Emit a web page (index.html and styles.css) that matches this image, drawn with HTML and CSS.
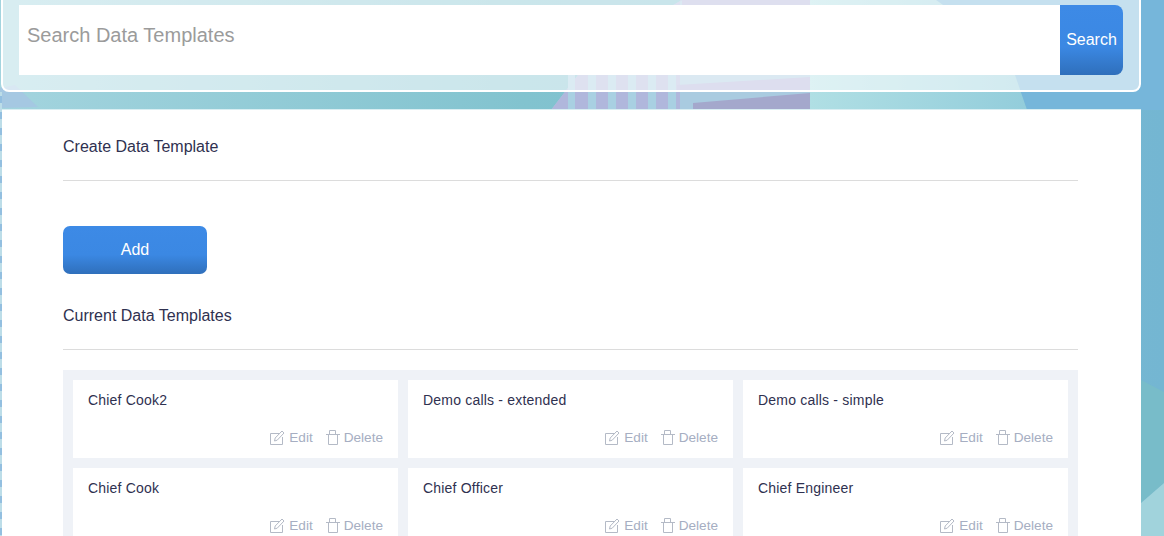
FILE: index.html
```html
<!DOCTYPE html>
<html lang="en">
<head>
<meta charset="utf-8">
<title>Data Templates</title>
<link rel="stylesheet" href="styles.css">
</head>
<body>
<svg class="backdrop" viewBox="0 0 1164 536" width="1164" height="536" aria-hidden="true">
  <defs>
    <linearGradient id="bg" x1="0" y1="0" x2="1" y2="0">
      <stop offset="0" stop-color="#a3d4de"/>
      <stop offset="0.45" stop-color="#82c3cf"/>
      <stop offset="1" stop-color="#74b6d2"/>
    </linearGradient>
    <linearGradient id="lite" x1="0" y1="0" x2="1" y2="0">
      <stop offset="0" stop-color="#b0dfe4"/>
      <stop offset="1" stop-color="#93cddb"/>
    </linearGradient>
    <pattern id="dash" width="2" height="16" patternUnits="userSpaceOnUse">
      <rect width="2" height="16" fill="#bcdde8"/>
      <rect width="2" height="7" fill="#93bfe0"/>
    </pattern>
  </defs>
  <rect width="1164" height="536" fill="url(#bg)"/>
  <path d="M0 88 L15 85 L38 107 L0 108Z" fill="#a5c8e2"/>
  <path d="M936 0 Q995 40 1015 75 L1027 110 L1164 110 L1164 0Z" fill="#76b6da"/>
  <path d="M810 0 L936 0 Q995 40 1015 75 L1027 110 L810 110Z" fill="url(#lite)"/>
  <path d="M682 0 Q620 35 578 75 L551 110 L810 110 L810 0Z" fill="#a9cbe0"/>
  <path d="M682 0 Q620 35 578 75 L551 110 L680 110 L680 0Z" fill="#b0b7dc"/>
  <path d="M682 0 L810 0 L810 7 L682 7Z" fill="#b0b3da"/>
  <g fill="#a9d0e2">
    <rect x="568" y="60" width="7" height="50"/>
    <rect x="588" y="50" width="8" height="60"/>
    <rect x="608" y="40" width="8" height="70"/>
    <rect x="628" y="30" width="8" height="80"/>
    <rect x="648" y="20" width="8" height="90"/>
    <rect x="668" y="10" width="8" height="100"/>
  </g>
  <path d="M677 85 L810 77 L810 92 L677 92Z" fill="#aeb0d8"/>
  <path d="M693 103 L810 93 L810 110 L693 110Z" fill="#a4a8cc"/>
  <path d="M1141 380 L1164 392 L1164 483 L1141 503Z" fill="#78bcc9"/>
  <path d="M1141 503 L1164 483 L1164 536 L1141 536Z" fill="#a1d3dc"/>
  <rect x="0" y="92" width="2" height="444" fill="url(#dash)"/>
</svg>
<div class="page">
  <form class="search-panel">
    <div class="search-box">
      <input class="search-input" type="text" placeholder="Search Data Templates">
      <button class="search-btn" type="button">Search</button>
    </div>
  </form>
  <main class="content">
    <h2 class="section-title">Create Data Template</h2>
    <hr class="rule">
    <button class="add-btn" type="button">Add</button>
    <h2 class="section-title">Current Data Templates</h2>
    <hr class="rule">
    <section class="grid">
      <article class="card"><p class="card-name">Chief Cook2</p><div class="actions"><a class="action"><svg class="ico" viewBox="0 0 15 15"><use href="#i-edit"/></svg>Edit</a><a class="action"><svg class="ico" viewBox="0 0 15 15"><use href="#i-trash"/></svg>Delete</a></div></article>
      <article class="card"><p class="card-name">Demo calls - extended</p><div class="actions"><a class="action"><svg class="ico" viewBox="0 0 15 15"><use href="#i-edit"/></svg>Edit</a><a class="action"><svg class="ico" viewBox="0 0 15 15"><use href="#i-trash"/></svg>Delete</a></div></article>
      <article class="card"><p class="card-name">Demo calls - simple</p><div class="actions"><a class="action"><svg class="ico" viewBox="0 0 15 15"><use href="#i-edit"/></svg>Edit</a><a class="action"><svg class="ico" viewBox="0 0 15 15"><use href="#i-trash"/></svg>Delete</a></div></article>
      <article class="card"><p class="card-name">Chief Cook</p><div class="actions"><a class="action"><svg class="ico" viewBox="0 0 15 15"><use href="#i-edit"/></svg>Edit</a><a class="action"><svg class="ico" viewBox="0 0 15 15"><use href="#i-trash"/></svg>Delete</a></div></article>
      <article class="card"><p class="card-name">Chief Officer</p><div class="actions"><a class="action"><svg class="ico" viewBox="0 0 15 15"><use href="#i-edit"/></svg>Edit</a><a class="action"><svg class="ico" viewBox="0 0 15 15"><use href="#i-trash"/></svg>Delete</a></div></article>
      <article class="card"><p class="card-name">Chief Engineer</p><div class="actions"><a class="action"><svg class="ico" viewBox="0 0 15 15"><use href="#i-edit"/></svg>Edit</a><a class="action"><svg class="ico" viewBox="0 0 15 15"><use href="#i-trash"/></svg>Delete</a></div></article>
    </section>
  </main>
</div>
<svg class="defs" width="0" height="0" aria-hidden="true">
  <symbol id="i-edit" viewBox="0 0 15 15"><path d="M9.5 3.5H.5V14.5H12.5V7" fill="none" stroke="#b4bac6"/><path d="M4.5 11L5.2 8L12 1L14 3L7.2 10.2Z" fill="none" stroke="#b4bac6"/></symbol>
  <symbol id="i-trash" viewBox="0 0 15 15"><path d="M1 4.5H15M4.5 4.5V.5H10.5V4.5M3.5 4.5V14.5H12.5V4.5" fill="none" stroke="#b4bac6"/></symbol>
</svg>
</body>
</html>
```
FILE: styles.css
```css
html, body {
  margin: 0;
  padding: 0;
  height: 536px;
  overflow: hidden;
}
body {
  font-family: "Liberation Sans", Arial, sans-serif;
  color: #2f3150;
  position: relative;
}
.backdrop {
  position: absolute;
  left: 0;
  top: 0;
}
.defs {
  position: absolute;
}
.page {
  position: relative;
  width: 1141px;
}
.search-panel {
  margin: -8px 0 0 1px;
  height: 100px;
  box-sizing: border-box;
  padding: 11px 16px 15px;
  width: 1140px;
  border: 2px solid #fff;
  border-radius: 8px;
  background: rgba(255, 255, 255, 0.58);
}
.search-box {
  display: flex;
  height: 70px;
}
.search-input {
  flex: 1;
  min-width: 0;
  border: 0;
  outline: 0;
  background: #fff;
  padding: 0 8px 10px;
  font: 20px "Liberation Sans", Arial, sans-serif;
  color: #333;
}
.search-input::placeholder {
  color: #9b9b9b;
  opacity: 1;
}
.search-btn {
  width: 63px;
  border: 0;
  border-radius: 0 8px 8px 0;
  background: linear-gradient(#3d8ae6 0%, #3b88e3 60%, #2f6fbb 100%);
  color: #fff;
  font: 16px "Liberation Sans", Arial, sans-serif;
  padding: 0;
}
.content {
  margin-top: 17px;
  margin-left: 2px;
  background: #fff;
  height: 440px;
  padding: 0 63px 0 61px;
  border-top: 1px solid #d9eef2;
}
.section-title {
  margin: 0;
  font-size: 16px;
  font-weight: 400;
  line-height: 18px;
  color: #2f3150;
  padding-top: 28px;
}
.rule {
  border: 0;
  border-top: 1px solid #dcdcdc;
  margin: 24px 0 0;
}
.add-btn {
  display: block;
  margin-top: 45px;
  margin-bottom: 5px;
  width: 144px;
  height: 48px;
  border: 0;
  border-radius: 7px;
  background: linear-gradient(#3d8ae6 0%, #3b88e3 60%, #2f6fbb 100%);
  color: #fff;
  font: 16px "Liberation Sans", Arial, sans-serif;
}
.grid {
  display: grid;
  grid-template-columns: repeat(3, 325px);
  gap: 10px;
  margin-top: 20px;
  padding: 10px;
  background: #eff2f7;
}
.card {
  background: #fff;
  height: 78px;
  box-sizing: border-box;
  padding: 12px 15px 0;
  display: flex;
  flex-direction: column;
}
.card-name {
  margin: 0;
  font-size: 14px;
  line-height: 16px;
  letter-spacing: 0.2px;
  color: #2f3150;
}
.actions {
  display: flex;
  justify-content: flex-end;
  gap: 12px;
  margin-top: 22px;
}
.action {
  display: flex;
  align-items: center;
  gap: 4px;
  font-size: 13.6px;
  line-height: 15px;
  color: #a6aec2;
}
.ico {
  width: 15px;
  height: 15px;
}
```
